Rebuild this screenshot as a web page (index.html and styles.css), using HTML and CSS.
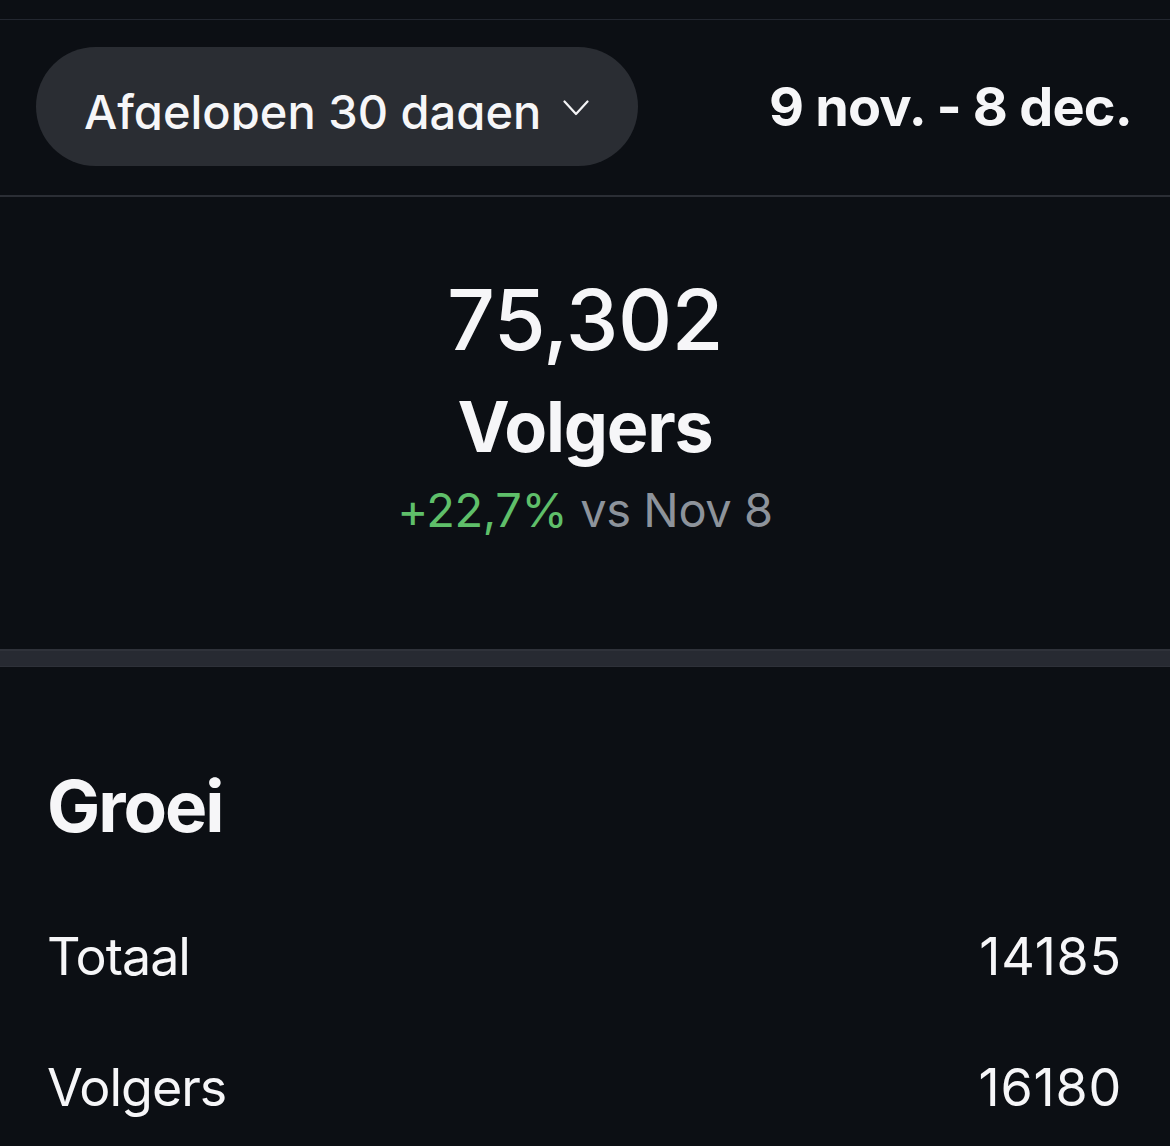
FILE: index.html
```html
<!DOCTYPE html>
<html lang="nl">
<head>
<meta charset="utf-8">
<link rel="stylesheet" href="styles.css">
</head>
<body>
<div class="topbar"></div>
<header class="range">
  <button class="pill">
    <span class="pill-label">Afgelopen 30 dagen</span>
    <svg class="chev" width="26" height="16" viewBox="0 0 26 16"><path d="M1.5 1.5 L13 14 L24.5 1.5" fill="none" stroke="#f4f4f6" stroke-width="2.2" stroke-linecap="round" stroke-linejoin="round"/></svg>
  </button>
  <div class="dates">9 nov. - 8 dec.</div>
</header>
<section class="total">
  <div class="big">75,302</div>
  <div class="label">Volgers</div>
  <div class="change"><span class="up">+22,7%</span> <span class="vs">vs Nov 8</span></div>
</section>
<div class="band"></div>
<section class="growth">
  <h2 class="title">Groei</h2>
  <div class="row"><span class="name">Totaal</span><span class="num">14185</span></div>
  <div class="row"><span class="name">Volgers</span><span class="num">16180</span></div>
</section>
</body>
</html>
```
FILE: styles.css
```css
* { box-sizing: border-box; }
html, body { margin: 0; padding: 0; }
body {
  background: #0c0f14;
  color: #f6f6f8;
  font-family: Inter, "Noto Sans", "Liberation Sans", sans-serif;
  width: 1170px;
  height: 1146px;
  overflow: hidden;
}
.topbar {
  height: 20px;
  border-bottom: 1px solid #232730;
}
.range {
  height: 177px;
  display: flex;
  align-items: flex-start;
  justify-content: space-between;
  padding: 27px 38px 0 36px;
  border-bottom: 2px solid #2b2e35;
}
.pill {
  width: 602px;
  height: 119px;
  border: none;
  border-radius: 60px;
  background: #2a2d33;
  display: flex;
  align-items: flex-start;
  padding: 41px 0 0 48px;
  color: #f6f6f8;
  font-family: inherit;
}
.pill-label {
  display: block;
  font-size: 47px;
  line-height: 47px;
  height: 42px;
  overflow: hidden;
  font-weight: 500;
  letter-spacing: 0;
  white-space: nowrap;
}
.chev {
  margin: 12px 0 0 22px;
  flex: none;
}
.dates {
  font-size: 54px;
  line-height: 54px;
  font-weight: 700;
  letter-spacing: -0.8px;
  margin-top: 33px;
}
.total {
  height: 452px;
  display: flex;
  flex-direction: column;
  align-items: center;
  padding-top: 81px;
}
.big {
  font-size: 84px;
  line-height: 84px;
  font-weight: 500;
  letter-spacing: -0.5px;
}
.label {
  font-size: 70px;
  line-height: 70px;
  font-weight: 700;
  margin-top: 30px;
  letter-spacing: -1.2px;
}
.change {
  font-size: 47px;
  line-height: 47px;
  margin-top: 24px;
  letter-spacing: -0.4px;
}
.up { color: #5fbf6a; }
.vs { color: #8d939b; }
.band {
  height: 18px;
  background: #272a32;
  border-top: 2px solid #2f323a;
  border-bottom: 1px solid #2e3139;
}
.growth {
  padding: 104px 50px 0 47px;
}
.title {
  margin: 0;
  font-size: 71px;
  line-height: 71px;
  font-weight: 700;
  letter-spacing: -2px;
}
.row {
  display: flex;
  justify-content: space-between;
  font-size: 52px;
  line-height: 52px;
  font-weight: 400;
  margin-top: 79px;
}
.name { letter-spacing: -1px; }
.num { letter-spacing: 0.8px; margin-right: -2px; }
.title + .row { margin-top: 89px; }
```
